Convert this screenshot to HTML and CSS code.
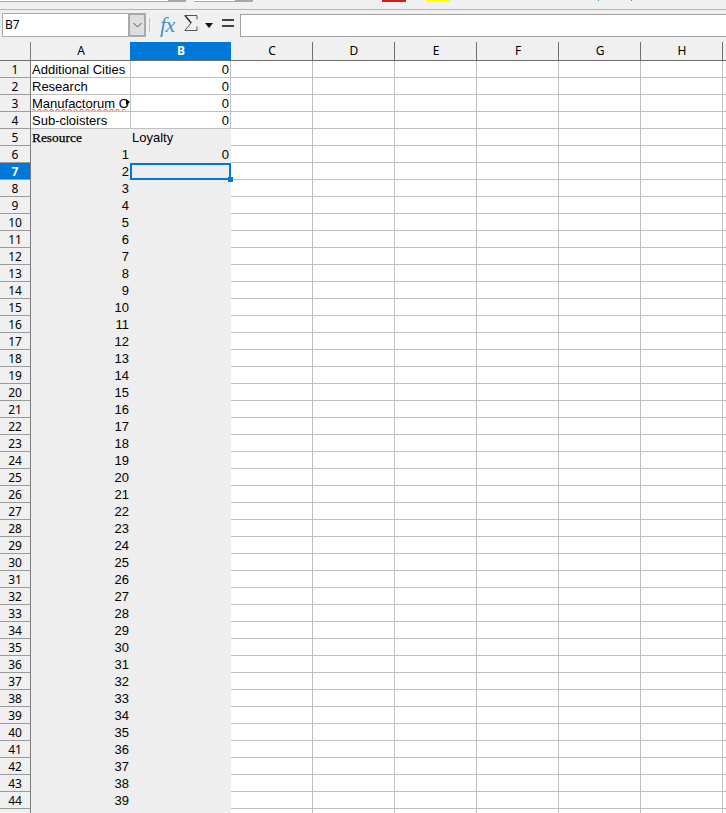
FILE: index.html
```html
<!DOCTYPE html>
<html lang="en">
<head>
<meta charset="utf-8">
<title>Spreadsheet</title>
<link rel="stylesheet" href="styles.css">
</head>
<body>
<div class="app">
  <div class="toolstrip">
    <div class="scrollbox scrollbox-one"><span class="thumb"></span></div>
    <div class="scrollbox scrollbox-two"><span class="thumb"></span></div>
    <span class="swatch swatch-red"></span>
    <span class="swatch swatch-yellow"></span>
    <span class="tick tick-one"></span>
    <span class="tick tick-two"></span>
  </div>
  <div class="formulabar">
    <div class="namebox">
      <span class="nameref">B7</span>
      <span class="namedrop"><svg width="9" height="6" viewBox="0 0 9 6"><path d="M.5 1l4 4 4-4" fill="none" stroke="#555" stroke-width="1"/></svg></span>
    </div>
    <span class="fsep"></span>
    <span class="fx">fx</span>
    <svg class="sigma" width="14" height="16" viewBox="0 0 14 16"><path d="M13 4.500V.5H.8L7 8 .8 15.500H13v-4" fill="none" stroke="#555" stroke-width="1"/><path d="M1 .5L7.200 8" stroke="#333" stroke-width="1.500"/></svg>
    <svg class="caret" width="8" height="5" viewBox="0 0 8 5"><path d="M0 0h8L4 5z" fill="#111"/></svg>
    <svg class="equals" width="12" height="8" viewBox="0 0 12 8"><path d="M0 0h12v2H0zM0 6h12v2H0z" fill="#444"/></svg>
    <div class="finput"></div>
  </div>
  <div class="sheet">
    <div class="row colhead"><span class="corner"></span><span class="ch cha">A</span><span class="ch chb chsel">B</span><span class="ch">C</span><span class="ch">D</span><span class="ch">E</span><span class="ch">F</span><span class="ch">G</span><span class="ch">H</span><span class="ch"></span></div>
    <div class="row"><span class="rh">1</span><span class="cell a">Additional Cities</span><span class="cell b num">0</span><i></i><i></i><i></i><i></i><i></i><i></i><i></i></div>
    <div class="row"><span class="rh">2</span><span class="cell a">Research</span><span class="cell b num">0</span><i></i><i></i><i></i><i></i><i></i><i></i><i></i></div>
    <div class="row"><span class="rh">3</span><span class="cell a">Manufactorum O<svg class="wave" width="94" height="4" viewBox="0 0 94 4"><path d="M0 2.500q1.500-3 3 0t3 0 3 0 3 0 3 0 3 0 3 0 3 0 3 0 3 0 3 0 3 0 3 0 3 0 3 0 3 0 3 0 3 0 3 0 3 0 3 0 3 0 3 0 3 0 3 0 3 0 3 0 3 0 3 0 3 0 3 0" fill="none" stroke="#e0302a" stroke-width="1"/></svg><span class="more"></span></span><span class="cell b num">0</span><i></i><i></i><i></i><i></i><i></i><i></i><i></i></div>
    <div class="row"><span class="rh">4</span><span class="cell a">Sub-cloisters</span><span class="cell b num">0</span><i></i><i></i><i></i><i></i><i></i><i></i><i></i></div>
    <div class="row"><span class="rh">5</span><span class="cell a g serif">Resource</span><span class="cell b g">Loyalty</span><i></i><i></i><i></i><i></i><i></i><i></i><i></i></div>
    <div class="row"><span class="rh">6</span><span class="cell a g num">1</span><span class="cell b g num">0</span><i></i><i></i><i></i><i></i><i></i><i></i><i></i></div>
    <div class="row"><span class="rh rhsel">7</span><span class="cell a g num">2</span><span class="cell b g selected"><span class="handle"></span></span><i></i><i></i><i></i><i></i><i></i><i></i><i></i></div>
    <div class="row"><span class="rh">8</span><span class="cell a g num">3</span><span class="cell b g"></span><i></i><i></i><i></i><i></i><i></i><i></i><i></i></div>
    <div class="row"><span class="rh">9</span><span class="cell a g num">4</span><span class="cell b g"></span><i></i><i></i><i></i><i></i><i></i><i></i><i></i></div>
    <div class="row"><span class="rh">10</span><span class="cell a g num">5</span><span class="cell b g"></span><i></i><i></i><i></i><i></i><i></i><i></i><i></i></div>
    <div class="row"><span class="rh">11</span><span class="cell a g num">6</span><span class="cell b g"></span><i></i><i></i><i></i><i></i><i></i><i></i><i></i></div>
    <div class="row"><span class="rh">12</span><span class="cell a g num">7</span><span class="cell b g"></span><i></i><i></i><i></i><i></i><i></i><i></i><i></i></div>
    <div class="row"><span class="rh">13</span><span class="cell a g num">8</span><span class="cell b g"></span><i></i><i></i><i></i><i></i><i></i><i></i><i></i></div>
    <div class="row"><span class="rh">14</span><span class="cell a g num">9</span><span class="cell b g"></span><i></i><i></i><i></i><i></i><i></i><i></i><i></i></div>
    <div class="row"><span class="rh">15</span><span class="cell a g num">10</span><span class="cell b g"></span><i></i><i></i><i></i><i></i><i></i><i></i><i></i></div>
    <div class="row"><span class="rh">16</span><span class="cell a g num">11</span><span class="cell b g"></span><i></i><i></i><i></i><i></i><i></i><i></i><i></i></div>
    <div class="row"><span class="rh">17</span><span class="cell a g num">12</span><span class="cell b g"></span><i></i><i></i><i></i><i></i><i></i><i></i><i></i></div>
    <div class="row"><span class="rh">18</span><span class="cell a g num">13</span><span class="cell b g"></span><i></i><i></i><i></i><i></i><i></i><i></i><i></i></div>
    <div class="row"><span class="rh">19</span><span class="cell a g num">14</span><span class="cell b g"></span><i></i><i></i><i></i><i></i><i></i><i></i><i></i></div>
    <div class="row"><span class="rh">20</span><span class="cell a g num">15</span><span class="cell b g"></span><i></i><i></i><i></i><i></i><i></i><i></i><i></i></div>
    <div class="row"><span class="rh">21</span><span class="cell a g num">16</span><span class="cell b g"></span><i></i><i></i><i></i><i></i><i></i><i></i><i></i></div>
    <div class="row"><span class="rh">22</span><span class="cell a g num">17</span><span class="cell b g"></span><i></i><i></i><i></i><i></i><i></i><i></i><i></i></div>
    <div class="row"><span class="rh">23</span><span class="cell a g num">18</span><span class="cell b g"></span><i></i><i></i><i></i><i></i><i></i><i></i><i></i></div>
    <div class="row"><span class="rh">24</span><span class="cell a g num">19</span><span class="cell b g"></span><i></i><i></i><i></i><i></i><i></i><i></i><i></i></div>
    <div class="row"><span class="rh">25</span><span class="cell a g num">20</span><span class="cell b g"></span><i></i><i></i><i></i><i></i><i></i><i></i><i></i></div>
    <div class="row"><span class="rh">26</span><span class="cell a g num">21</span><span class="cell b g"></span><i></i><i></i><i></i><i></i><i></i><i></i><i></i></div>
    <div class="row"><span class="rh">27</span><span class="cell a g num">22</span><span class="cell b g"></span><i></i><i></i><i></i><i></i><i></i><i></i><i></i></div>
    <div class="row"><span class="rh">28</span><span class="cell a g num">23</span><span class="cell b g"></span><i></i><i></i><i></i><i></i><i></i><i></i><i></i></div>
    <div class="row"><span class="rh">29</span><span class="cell a g num">24</span><span class="cell b g"></span><i></i><i></i><i></i><i></i><i></i><i></i><i></i></div>
    <div class="row"><span class="rh">30</span><span class="cell a g num">25</span><span class="cell b g"></span><i></i><i></i><i></i><i></i><i></i><i></i><i></i></div>
    <div class="row"><span class="rh">31</span><span class="cell a g num">26</span><span class="cell b g"></span><i></i><i></i><i></i><i></i><i></i><i></i><i></i></div>
    <div class="row"><span class="rh">32</span><span class="cell a g num">27</span><span class="cell b g"></span><i></i><i></i><i></i><i></i><i></i><i></i><i></i></div>
    <div class="row"><span class="rh">33</span><span class="cell a g num">28</span><span class="cell b g"></span><i></i><i></i><i></i><i></i><i></i><i></i><i></i></div>
    <div class="row"><span class="rh">34</span><span class="cell a g num">29</span><span class="cell b g"></span><i></i><i></i><i></i><i></i><i></i><i></i><i></i></div>
    <div class="row"><span class="rh">35</span><span class="cell a g num">30</span><span class="cell b g"></span><i></i><i></i><i></i><i></i><i></i><i></i><i></i></div>
    <div class="row"><span class="rh">36</span><span class="cell a g num">31</span><span class="cell b g"></span><i></i><i></i><i></i><i></i><i></i><i></i><i></i></div>
    <div class="row"><span class="rh">37</span><span class="cell a g num">32</span><span class="cell b g"></span><i></i><i></i><i></i><i></i><i></i><i></i><i></i></div>
    <div class="row"><span class="rh">38</span><span class="cell a g num">33</span><span class="cell b g"></span><i></i><i></i><i></i><i></i><i></i><i></i><i></i></div>
    <div class="row"><span class="rh">39</span><span class="cell a g num">34</span><span class="cell b g"></span><i></i><i></i><i></i><i></i><i></i><i></i><i></i></div>
    <div class="row"><span class="rh">40</span><span class="cell a g num">35</span><span class="cell b g"></span><i></i><i></i><i></i><i></i><i></i><i></i><i></i></div>
    <div class="row"><span class="rh">41</span><span class="cell a g num">36</span><span class="cell b g"></span><i></i><i></i><i></i><i></i><i></i><i></i><i></i></div>
    <div class="row"><span class="rh">42</span><span class="cell a g num">37</span><span class="cell b g"></span><i></i><i></i><i></i><i></i><i></i><i></i><i></i></div>
    <div class="row"><span class="rh">43</span><span class="cell a g num">38</span><span class="cell b g"></span><i></i><i></i><i></i><i></i><i></i><i></i><i></i></div>
    <div class="row"><span class="rh">44</span><span class="cell a g num">39</span><span class="cell b g"></span><i></i><i></i><i></i><i></i><i></i><i></i><i></i></div>
    <div class="row"><span class="rh"></span><span class="cell a g"></span><span class="cell b g"></span><i></i><i></i><i></i><i></i><i></i><i></i><i></i></div>
  </div>
</div>
</body>
</html>
```

FILE: styles.css
```css
* { box-sizing: border-box; }
html, body { margin: 0; padding: 0; background: #fff; }
.app { width: 726px; height: 813px; overflow: hidden; background: #f0f0f0; font-family: "Liberation Sans", Arial, sans-serif; color: #000; }

.toolstrip { position: relative; height: 10px; background: #f0f0f0; border-bottom: 1px solid #b4b4b4; }
.scrollbox { position: absolute; top: 0; height: 2px; background: #fff; border-bottom: 1px solid #a8a8a8; }
.scrollbox-one { left: 0; width: 186px; }
.scrollbox-two { left: 194px; width: 59px; }
.thumb { position: absolute; right: 0; top: 0; width: 18px; height: 2px; background: #a8a8a8; }
.swatch { position: absolute; top: 0; width: 24px; height: 2px; }
.swatch-red { left: 382px; background: #c9211e; }
.swatch-yellow { left: 426px; background: #ffff00; }
.tick { position: absolute; top: 0; width: 1px; height: 1px; background: #2a9bd8; }
.tick-one { left: 598px; }
.tick-two { left: 631px; }

.formulabar { display: flex; align-items: flex-start; height: 32px; background: #f0f0f0; padding-left: 2px; }
.namebox { display: flex; width: 144px; height: 24px; margin-top: 3px; background: #fff; border: 1px solid #a9a9a9; }
.nameref { flex: 1; padding-left: 2px; font: 12px/22px "Noto Sans", sans-serif; }
.namedrop { display: flex; align-items: center; justify-content: center; width: 18px; margin: -1px -1px -1px 0; background: #dedede; border: 2px solid #a9a9a9; }
.fsep { width: 1px; height: 14px; margin: 8px 0 0 3px; background: #c4c4c4; }
.fx { width: 18px; margin: 2px 0 0 10px; font: italic 22px/26px "Liberation Serif", serif; color: #3b93cf; letter-spacing: -0.5px; }
.sigma { margin: 5px 0 0 6px; }
.caret { margin: 13px 0 0 7px; }
.equals { margin: 9px 0 0 9px; }
.finput { flex: 1; height: 23px; margin: 4px 0 0 6px; background: #fff; border: 1px solid #a0a0a0; border-right: 0; }

.sheet { display: flex; flex-direction: column; }
.row { display: flex; flex: none; height: 17px; width: 805px; background: #fff; }
.colhead { height: 19px; background: #f0f0f0; border-bottom: 1px solid #6e6e6e; }
.corner { flex: none; width: 31px; border-right: 1px solid #7a7a7a; }
.ch { flex: none; width: 82px; padding-left: 1px; border-right: 1px solid #6e6e6e; text-align: center; font: 12px/18px "Noto Sans", sans-serif; }
.cha { border-right: 0; width: 99px; }
.chb { width: 101px; }
.chsel { background: #0078d7; color: #fff; font-weight: 700; border-right: 0; }

.rh { flex: none; width: 31px; height: 17px; background: #f0f0f0; border-right: 1px solid #7a7a7a; border-bottom: 1px solid #9a9a9a; text-align: center; font: 12px/18px "Noto Sans", sans-serif; }
.rhsel { background: #0078d7; color: #fff; font-weight: 700; }

.row i { flex: none; width: 82px; height: 17px; border-right: 1px solid #c0c0c0; border-bottom: 1px solid #c0c0c0; }
.cell { position: relative; flex: none; width: 100px; height: 17px; padding: 0 1px; border-right: 1px solid #c0c0c0; border-bottom: 1px solid #c0c0c0; font-size: 13px; line-height: 18px; white-space: nowrap; overflow: hidden; }
.num { text-align: right; }
.g { background: #eeeeee; border-color: #eeeeee; }
.serif { font: 400 13.400px/18px "Liberation Serif", serif; -webkit-text-stroke: 0.25px #000; }
.wave { position: absolute; left: 1px; top: 13px; }
.more { position: absolute; right: 0; top: 4px; width: 0; height: 0; border-left: 4px solid #000; border-top: 3px solid transparent; border-bottom: 3px solid transparent; }
.selected { overflow: visible; margin-left: -1px; width: 101px; border: 2px solid #0078d7; z-index: 2; }
.handle { position: absolute; right: -4px; bottom: -4px; width: 5px; height: 5px; background: #0078d7; }
```
